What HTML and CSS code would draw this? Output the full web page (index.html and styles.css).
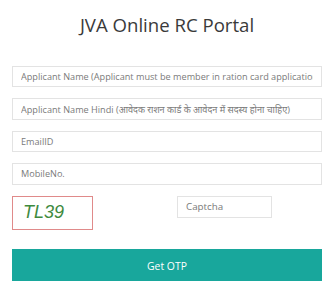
FILE: index.html
```html
<!DOCTYPE html>
<html>
<head>
<meta charset="utf-8">
<link rel="stylesheet" href="styles.css">
</head>
<body>
<div class="page">
  <h1 class="title">JVA Online RC Portal</h1>
  <form class="form">
    <input class="field" type="text" placeholder="Applicant Name (Applicant must be member in ration card application)">
    <input class="field field-hindi" type="text" placeholder="Applicant Name Hindi (आवेदक राशन कार्ड के आवेदन में सदस्य होना चाहिए)">
    <input class="field" type="text" placeholder="EmailID">
    <input class="field" type="text" placeholder="MobileNo.">
    <div class="captcha-row">
      <div class="captcha-img"><span class="captcha-text">TL39</span></div>
      <input class="captcha-input" type="text" placeholder="Captcha">
    </div>
    <button class="btn" type="button">Get OTP</button>
  </form>
</div>
</body>
</html>
```
FILE: styles.css
```css
html, body {
  margin: 0;
  padding: 0;
  background: #fff;
}
.page {
  padding: 0 10px 0 12px;
  font-family: "Open Sans", "Noto Sans", sans-serif;
}
.title {
  margin: 0;
  padding-top: 11px;
  height: 66px;
  box-sizing: border-box;
  text-align: center;
  font-weight: 400;
  font-size: 18.6px;
  color: #3a3a3a;
  line-height: 27px;
}
.form {
  display: flex;
  flex-direction: column;
}
.field {
  height: 21.4px;
  box-sizing: border-box;
  border: 1px solid #e3e3e3;
  padding: 0 8px;
  margin-bottom: 11px;
  font-family: "Open Sans", "Noto Sans", sans-serif;
  font-size: 9.15px;
  color: #666;
  outline: none;
}
.field-hindi {
  font-family: "Open Sans", "Noto Sans Devanagari", "Noto Sans", sans-serif;
}
.field::placeholder, .captcha-input::placeholder {
  color: #7a7a7a;
  opacity: 1;
}
.captcha-row {
  margin-top: 0.4px;
  display: flex;
  align-items: flex-start;
  height: 53px;
}
.captcha-img {
  width: 81px;
  height: 34px;
  box-sizing: border-box;
  border: 1px solid #e08a8a;
  padding-left: 10px;
  display: flex;
  align-items: center;
}
.captcha-text {
  font-family: "Liberation Sans", Arial, sans-serif;
  font-style: italic;
  font-size: 18px;
  color: #3e8a3e;
}
.captcha-input {
  margin-left: 84px;
  width: 95px;
  height: 22px;
  box-sizing: border-box;
  border: 1px solid #e3e3e3;
  padding: 0 8px;
  font-family: "Open Sans", "Noto Sans", sans-serif;
  font-size: 9.8px;
  outline: none;
}
.btn {
  height: 34px;
  border: none;
  background: #18a79c;
  color: #fff;
  font-family: "Open Sans", "Noto Sans", sans-serif;
  font-size: 10.4px;
  padding: 0;
}
```
